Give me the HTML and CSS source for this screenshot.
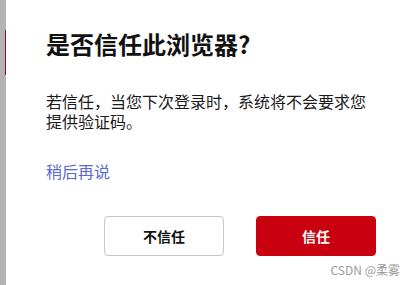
FILE: index.html
```html
<!DOCTYPE html>
<html lang="zh-CN">
<head>
<meta charset="utf-8">
<title>是否信任此浏览器?</title>
<link rel="stylesheet" href="styles.css">
</head>
<body>
<div class="page">
  <div class="edge"><div class="edge-mark"></div></div>
  <div class="dialog">
    <h1 class="title">是否信任此浏览器?</h1>
    <p class="desc">若信任，当您下次登录时，系统将不会要求您提供验证码。</p>
    <a class="later" href="#">稍后再说</a>
    <div class="actions">
      <button class="btn btn-plain">不信任</button>
      <button class="btn btn-primary">信任</button>
    </div>
  </div>
  <div class="watermark">CSDN @柔雾</div>
</div>
</body>
</html>
```
FILE: styles.css
```css
html, body {
  margin: 0;
  padding: 0;
}
body {
  width: 416px;
  height: 285px;
  overflow: hidden;
  background: #b3b3b3;
  font-family: "Noto Sans CJK SC", "Noto Sans", sans-serif;
}
.page {
  position: relative;
  display: flex;
  height: 285px;
}
.edge {
  width: 6px;
  flex: none;
  background: #b3b3b3;
}
.edge-mark {
  margin-top: 30px;
  margin-left: 5px;
  width: 1px;
  height: 45px;
  background: #8e1020;
}
.dialog {
  flex: 1;
  background: #ffffff;
  padding: 28px 40px 0 40px;
  display: flex;
  flex-direction: column;
  align-items: flex-start;
}
.title {
  margin: 0;
  font-size: 24px;
  line-height: 32px;
  font-weight: 700;
  color: #111111;
}
.desc {
  margin: 31px 0 0 0;
  font-size: 16px;
  line-height: 20px;
  color: #1a1a1a;
  width: 330px;
}
.later {
  margin-top: 30px;
  font-size: 16px;
  line-height: 20px;
  color: #5a6acf;
  text-decoration: none;
}
.actions {
  margin-top: 35px;
  align-self: stretch;
  display: flex;
  justify-content: flex-end;
  gap: 32px;
}
.btn {
  width: 120px;
  height: 40px;
  border-radius: 4px;
  font-family: "Noto Sans CJK SC", "Noto Sans", sans-serif;
  font-size: 14px;
  font-weight: 700;
  cursor: pointer;
}
.btn-plain {
  background: #ffffff;
  border: 1px solid #c8c8c8;
  color: #111111;
}
.btn-primary {
  background: #c8000f;
  border: 1px solid #c8000f;
  color: #ffffff;
}
.watermark {
  position: absolute;
  right: 16px;
  top: 262px;
  font-size: 12px;
  line-height: 16px;
  color: #9a9a9a;
}
```
